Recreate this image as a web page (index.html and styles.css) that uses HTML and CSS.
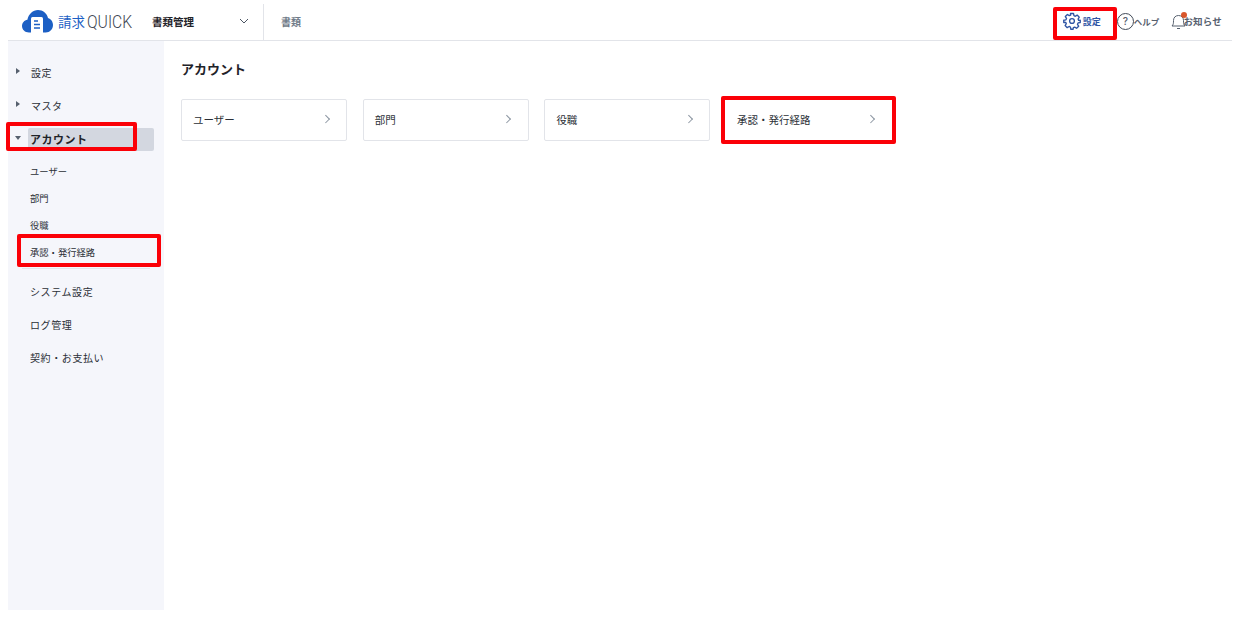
FILE: index.html
```html
<!DOCTYPE html>
<html lang="ja">
<head>
    <meta charset="UTF-8">
    <title>アカウント</title>
    <link rel="stylesheet" href="styles.css">
</head>
<body>
<div class="page">
    <!-- ヘッダー -->
    <header class="header">
        <div class="logo">
            <svg class="logo-icon" width="31" height="23" viewBox="0 0 31 23">
                <path fill="#1c5fc4" d="M7 22.5C3 22.5 0 19.6 0 16c0-3.200 2.300-5.800 5.400-6.300C6.500 4.100 11 0 16 0c4.900 0 9 3.400 10 8 2.900.9 5 3.700 5 7 0 4.200-3.200 7.500-7.300 7.500z"/>
                <path fill="#fff" d="M9 8.500a1.500 1.500 0 0 1 1.500-1.500h9a1.500 1.500 0 0 1 1.500 1.500V23H9z"/>
                <path stroke="#1c5fc4" stroke-width="1.500" d="M12 11h4M12 14.500h6M12 18h6"/>
            </svg>
            <span class="logo-kanji">請求</span>
            <span class="logo-text">QUICK</span>
        </div>
        <div class="doc-select">
            <span>書類管理</span>
            <svg width="10" height="6" viewBox="0 0 10 6"><path d="M1 1l4 4 4-4" fill="none" stroke="#4b5563" stroke-width="1"/></svg>
        </div>
        <div class="header-tab">書類</div>
        <nav class="header-nav">
            <a class="nav-item nav-settings">
                <svg width="18" height="18" viewBox="0 0 24 24" fill="none" stroke="#2f55a4" stroke-width="1.800" stroke-linejoin="round"><circle cx="12" cy="12" r="3.200"/><path d="M10 2h4l.6 2.900 1.800.8 2.500-1.600 2.800 2.800-1.600 2.500.8 1.800L23 11v3l-2.900.6-.8 1.800 1.600 2.500-2.800 2.800-2.500-1.600-1.800.8L13.500 23h-3l-.6-2.900-1.800-.8-2.500 1.600-2.800-2.800 1.600-2.500-.8-1.800L1 14v-3l2.900-.6.8-1.800-1.600-2.500 2.800-2.800 2.500 1.600 1.800-.8z"/></svg>
                <span>設定</span>
            </a>
            <a class="nav-item nav-help">
                <span class="help-icon">?</span>
                <span class="help-label">ヘルプ</span>
            </a>
            <a class="nav-item nav-news">
                <span class="bell">
                    <svg width="15" height="17" viewBox="0 0 15 17" fill="none" stroke="#56606e" stroke-width="1"><path d="M1 13c1.500-1.500 1.500-3 1.500-5.500C2.500 4.500 4.500 2.500 7.500 2.500s5 2 5 5c0 2.500 0 4 1.500 5.500zM6 15.500h3"/></svg>
                    <i class="bell-dot"></i>
                </span>
                <span class="news-label">お知らせ</span>
            </a>
        </nav>
        <div class="mark mark-settings"></div>
    </header>

    <div class="main">
        <!-- サイドバー -->
        <aside class="sidebar">
            <div class="side-group"><i class="tri"></i><span>設定</span></div>
            <div class="side-group"><i class="tri"></i><span>マスタ</span></div>
            <div class="side-group side-open">
                <i class="tri tri-down"></i><span class="side-current">アカウント</span>
                <div class="mark mark-account"></div>
            </div>
            <ul class="side-sub">
                <li>ユーザー</li>
                <li>部門</li>
                <li>役職</li>
                <li class="side-route">承認・発行経路<div class="mark mark-route"></div></li>
            </ul>
            <div class="side-link side-link-first">システム設定</div>
            <div class="side-link">ログ管理</div>
            <div class="side-link">契約・お支払い</div>
        </aside>

        <!-- コンテンツ -->
        <section class="content">
            <h1>アカウント</h1>
            <div class="cards">
                <a class="card"><span>ユーザー</span><i class="arrow"></i></a>
                <a class="card"><span>部門</span><i class="arrow"></i></a>
                <a class="card"><span>役職</span><i class="arrow"></i></a>
                <a class="card card-route"><span>承認・発行経路</span><i class="arrow"></i><div class="mark mark-card"></div></a>
            </div>
        </section>
    </div>
</div>
</body>
</html>
```

FILE: styles.css
```css
* {
    margin: 0;
    padding: 0;
    box-sizing: border-box;
}

body {
    font-family: "Inter", "Noto Sans CJK JP", sans-serif;
    background-color: #ffffff;
    color: #2b2f36;
}

.page {
    width: 1224px;
    margin-left: 8px;
}

/* ヘッダー */
.header {
    position: relative;
    display: flex;
    align-items: center;
    height: 41px;
    padding-top: 2px;
    border-bottom: 1px solid #e2e4e9;
}

.logo {
    display: flex;
    align-items: center;
    margin-left: 14px;
    width: 130px;
}

.logo-kanji {
    margin-left: 5px;
    font-family: "Noto Sans CJK JP", sans-serif;
    font-size: 13.500px;
    color: #1c5fc4;
}

.logo-text {
    margin-left: 2px;
    font-family: "Roboto", "Liberation Sans", sans-serif;
    font-size: 18px;
    font-weight: 300;
    color: #3e4652;
    white-space: nowrap;
    transform: scaleX(0.87);
    transform-origin: left center;
}

.doc-select {
    display: flex;
    align-items: center;
    justify-content: space-between;
    width: 97px;
    font-size: 10.500px;
    font-weight: 700;
    color: #1f2329;
}

.header-tab {
    align-self: flex-end;
    margin-left: 14px;
    height: 36px;
    line-height: 36px;
    padding-left: 17px;
    border-left: 1px solid #e2e4e9;
    font-size: 10px;
    font-weight: 700;
    color: #6f7b88;
}

.header-nav {
    display: flex;
    align-items: center;
    margin-left: auto;
    padding-right: 10px;
    font-size: 9px;
    font-weight: 700;
}

.nav-item {
    display: flex;
    align-items: center;
}

.nav-settings {
    gap: 2px;
    color: #2f55a4;
    margin-right: 16px;
}

.nav-help {
    color: #56606e;
    margin-right: 12px;
}

.help-icon {
    width: 17px;
    height: 17px;
    border: 1px solid #414a57;
    border-radius: 50%;
    font-size: 10px;
    font-weight: 500;
    line-height: 15px;
    text-align: center;
}

.help-label {
    font-size: 8.500px;
}

.nav-news {
    color: #56606e;
}

.news-label {
    margin-left: -3px;
    font-size: 9.500px;
    letter-spacing: 0.2px;
}

.bell {
    position: relative;
    display: block;
    width: 15px;
    height: 17px;
}

.bell-dot {
    position: absolute;
    top: -1px;
    right: -1px;
    width: 6px;
    height: 6px;
    border-radius: 50%;
    background-color: #d9562b;
}

/* 赤枠 */
.mark {
    position: absolute;
    border: 4px solid #fb0007;
    border-radius: 2px;
    pointer-events: none;
}

.mark-settings {
    left: 1045px;
    top: 7px;
    width: 64px;
    height: 33px;
}

.mark-account {
    left: -2px;
    top: -1px;
    width: 131px;
    height: 29px;
}

.mark-route {
    left: -5px;
    top: -5px;
    width: 144px;
    height: 33px;
}

.mark-card {
    left: -6px;
    top: -4px;
    width: 175px;
    height: 48px;
}

/* メイン */
.main {
    display: flex;
}

.sidebar {
    width: 156px;
    height: 569px;
    padding-top: 15px;
    background-color: #f5f6fb;
}

.side-group {
    display: flex;
    align-items: center;
    height: 33px;
    padding-left: 8px;
    font-size: 10px;
    color: #2b2f36;
}

.side-group span {
    margin-left: 11px;
    letter-spacing: 0.5px;
}

.tri {
    display: block;
    width: 0;
    height: 0;
    margin-top: -4px;
    border-left: 4px solid #56606e;
    border-top: 3px solid transparent;
    border-bottom: 3px solid transparent;
}

.tri-down {
    margin-top: -3px;
    border-left: 3px solid transparent;
    border-right: 3px solid transparent;
    border-top: 4px solid #56606e;
    border-bottom: 0;
}

.side-open {
    position: relative;
    margin-top: 1px;
    padding-left: 7px;
}

.side-group .side-current {
    display: block;
    width: 126px;
    height: 23px;
    line-height: 24px;
    margin-left: 7px;
    padding-left: 2px;
    border-radius: 2px;
    background-color: #d3d7e0;
    font-size: 11px;
    font-weight: 700;
    color: #1f2329;
}

.side-sub {
    list-style: none;
    margin: -1px 14px 0 14px;
    padding: 3px 0 2px;
    border-bottom: 1px solid #e2e4e9;
    font-size: 9.300px;
    color: #2b2f36;
}

.side-sub li {
    height: 27px;
    line-height: 27px;
    padding-left: 8px;
}

.side-route {
    position: relative;
}

.side-link {
    height: 33px;
    line-height: 33px;
    padding-left: 22px;
    font-size: 10px;
    letter-spacing: 0.6px;
    color: #2b2f36;
}

.side-link-first {
    margin-top: 7px;
}

/* コンテンツ */
.content {
    padding: 19px 0 0 17px;
}

.content h1 {
    height: 18px;
    line-height: 18px;
    margin-bottom: 21px;
    font-size: 13px;
    font-weight: 700;
    color: #1f2329;
}

.cards {
    display: flex;
    gap: 15.700px;
}

.card {
    position: relative;
    display: flex;
    align-items: center;
    justify-content: space-between;
    width: 166px;
    height: 42px;
    padding: 0 18px 2px 11px;
    border: 1px solid #e2e4e9;
    border-radius: 2px;
    background-color: #ffffff;
    font-size: 10.500px;
}

.card-route {
    padding-left: 10px;
    border-color: transparent;
}

.arrow {
    display: block;
    width: 5.500px;
    height: 5.500px;
    border-top: 1px solid #8a94a0;
    border-right: 1px solid #8a94a0;
    transform: rotate(45deg);
}
```
